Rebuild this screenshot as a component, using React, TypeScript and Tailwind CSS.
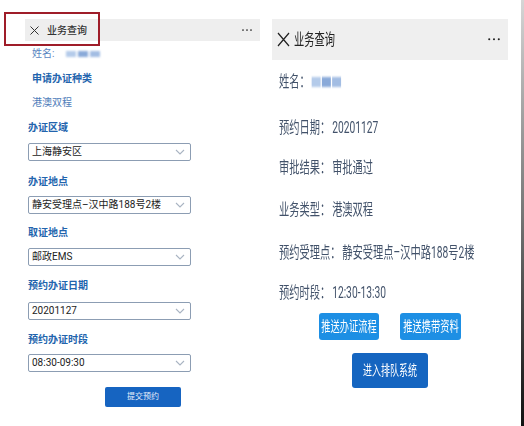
import React from "react";

const font = { fontFamily: 'Roboto, "Noto Sans CJK SC", sans-serif' };

function Chevron() {
  return (
    <svg width="10" height="6" viewBox="0 0 10 6" className="mr-[5px]">
      <path d="M1 1 L5 5 L9 1" fill="none" stroke="#a9b4c2" strokeWidth="1.1" />
    </svg>
  );
}

function Select({ value, mt }: { value: string; mt: string }) {
  return (
    <div
      className={`${mt} ml-[28px] flex h-[18px] w-[163px] items-center justify-between rounded-[2px] border border-[#8c9db3] bg-white pl-[3px] text-[10px] leading-none text-[#222]`}
    >
      <span>{value}</span>
      <Chevron />
    </div>
  );
}

function Label({ text, mt }: { text: string; mt: string }) {
  return <div className={`${mt} ml-[28px] h-[14px] text-[10px] font-bold leading-[14px] text-[#2264ad]`}>{text}</div>;
}

function Blur({ w, h }: { w: string; h: string }) {
  return (
    <span className="flex items-center gap-[2px] blur-[1px]">
      <span className={`${w} ${h} bg-[#b4cbea]`} />
      <span className={`${w} ${h} bg-[#8aaad9]`} />
      <span className={`${w} ${h} bg-[#a3bde3]`} />
    </span>
  );
}

function Dots({ size }: { size: number }) {
  return (
    <svg width={size * 5} height={size} viewBox="0 0 15 3">
      <circle cx="1.5" cy="1.5" r="1.3" fill="#222" />
      <circle cx="7.5" cy="1.5" r="1.3" fill="#222" />
      <circle cx="13.5" cy="1.5" r="1.3" fill="#222" />
    </svg>
  );
}

function LeftPanel() {
  return (
    <div className="relative w-[262px] shrink-0 pt-[19px]">
      <div className="ml-[25px] flex h-[22px] w-[235px] items-center bg-[#eeeeee]">
        <svg width="9" height="9" viewBox="0 0 9 9" className="ml-[5px]">
          <path d="M0.5 0.5 L8.5 8.5 M8.5 0.5 L0.5 8.5" stroke="#333" strokeWidth="1" />
        </svg>
        <span className="ml-[8px] text-[10px] font-medium text-[#333]">业务查询</span>
        <span className="ml-auto mr-[8px] flex">
          <Dots size={2} />
        </span>
      </div>
      <div className="pointer-events-none absolute left-[4px] top-[12px] h-[34px] w-[96px] border-2 border-[#9f1d29]" />

      <div className="ml-[32px] mt-[6px] flex h-[14px] items-center text-[10px] leading-[14px] text-[#5a86c2]">
        <span>姓名:</span>
        <span className="ml-[12px]">
          <Blur w="w-[10px]" h="h-[6px]" />
        </span>
      </div>
      <div className="ml-[32px] mt-[11px] h-[14px] text-[10px] font-bold leading-[14px] text-[#2264ad]">申请办证种类</div>
      <div className="ml-[32px] mt-[10px] h-[14px] text-[10px] leading-[14px] text-[#4f7dba]">港澳双程</div>

      <Label text="办证区域" mt="mt-[11px]" />
      <Select value="上海静安区" mt="mt-[8px]" />
      <Label text="办证地点" mt="mt-[14px]" />
      <Select value="静安受理点–汉中路188号2楼" mt="mt-[7px]" />
      <Label text="取证地点" mt="mt-[12px]" />
      <Select value="邮政EMS" mt="mt-[8px]" />
      <Label text="预约办证日期" mt="mt-[13px]" />
      <Select value="20201127" mt="mt-[9px]" />
      <Label text="预约办证时段" mt="mt-[13px]" />
      <Select value="08:30-09:30" mt="mt-[7px]" />

      <div className="ml-[105px] mt-[15px] flex h-[20px] w-[76px] items-center justify-center rounded-[2px] bg-[#1664c1] text-[8px] text-[#e6eefa]">
        提交预约
      </div>
    </div>
  );
}

function Row({ label, value, mt }: { label: string; value: React.ReactNode; mt: string }) {
  return (
    <div className={`${mt} ml-[17px] flex h-[20px] origin-left scale-x-[0.64] items-center whitespace-nowrap text-[16px] leading-[20px] text-[#42526a]`}>
      <span>{label}</span>
      <span className="ml-[3px]">{value}</span>
    </div>
  );
}

function RightPanel() {
  return (
    <div className="w-[258px] shrink-0 pt-[19px]">
      <div className="ml-[10px] flex h-[41px] w-[236px] items-center bg-[#efefef]">
        <svg width="13" height="15" viewBox="0 0 13 15" className="ml-[5px]">
          <path d="M1 1 L12 14 M12 1 L1 14" stroke="#222" strokeWidth="1.2" />
        </svg>
        <span className="ml-[4px] inline-block origin-left scale-x-[0.64] whitespace-nowrap text-[16px] text-[#222]">业务查询</span>
        <span className="ml-auto mr-[8px] flex">
          <Dots size={2.4} />
        </span>
      </div>

      <Row
        label="姓名："
        mt="mt-[12px]"
        value={
          <span className="inline-block w-[48px]">
            <Blur w="w-[14px]" h="h-[10px]" />
          </span>
        }
      />
      <Row label="预约日期：" value="20201127" mt="mt-[26px]" />
      <Row label="审批结果：" value="审批通过" mt="mt-[20px]" />
      <Row label="业务类型：" value="港澳双程" mt="mt-[22px]" />
      <Row label="预约受理点：" value="静安受理点–汉中路188号2楼" mt="mt-[23px]" />
      <Row label="预约时段：" value="12:30-13:30" mt="mt-[20px]" />

      <div className="ml-[57px] mt-[10px] flex gap-[21px]">
        <div className="flex h-[27px] w-[60px] items-center justify-center rounded-[3px] bg-[#1d8fe4] text-white">
          <span className="inline-block scale-x-[0.66] whitespace-nowrap text-[14px]">推送办证流程</span>
        </div>
        <div className="flex h-[27px] w-[61px] items-center justify-center rounded-[3px] bg-[#1d8fe4] text-white">
          <span className="inline-block scale-x-[0.66] whitespace-nowrap text-[14px]">推送携带资料</span>
        </div>
      </div>
      <div className="ml-[90px] mt-[13px] flex h-[35px] w-[76px] items-center justify-center rounded-[3px] bg-[#1565c0] text-white">
        <span className="inline-block scale-x-[0.64] whitespace-nowrap text-[14px]">进入排队系统</span>
      </div>
    </div>
  );
}

export default function App() {
  return (
    <div className="flex h-[426px] w-[524px] overflow-hidden bg-white" style={font}>
      <LeftPanel />
      <RightPanel />
      <div className="ml-[1px] w-[3px] bg-linear-to-b from-[#d6d6d6] via-[#777] to-[#111]" />
    </div>
  );
}
